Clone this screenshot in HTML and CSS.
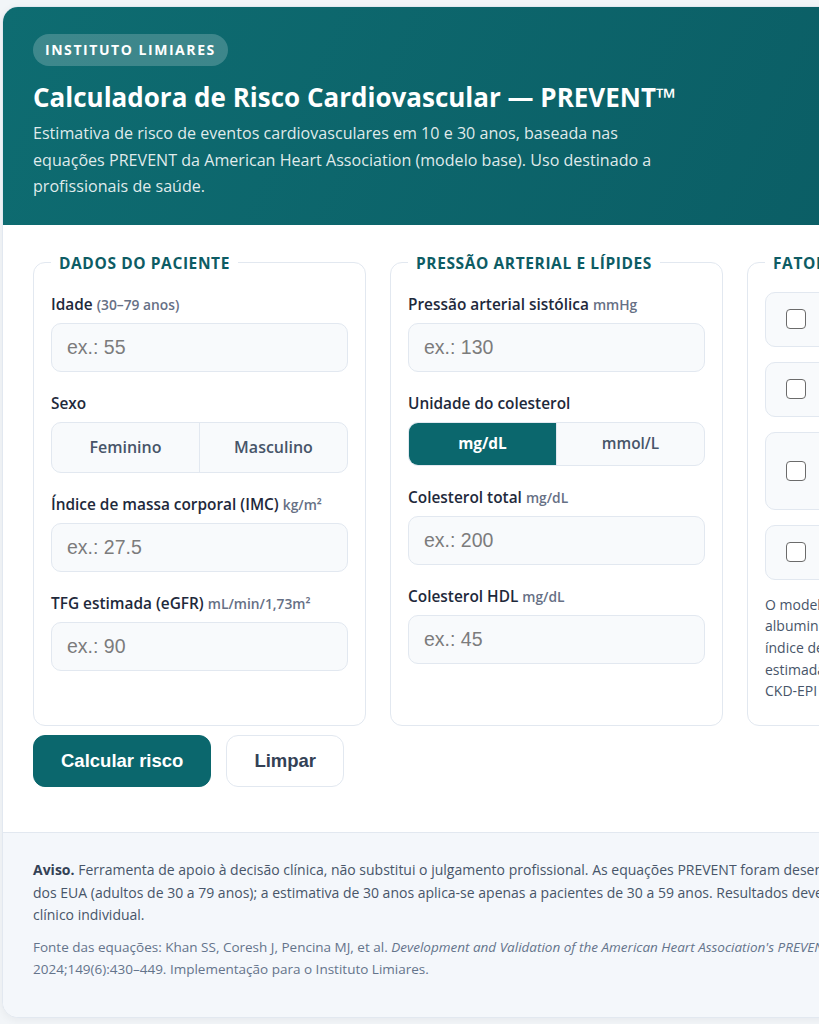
FILE: index.html
```html
<!DOCTYPE html>
<html lang="pt-BR">
<head>
  <meta charset="UTF-8">
  <meta name="viewport" content="width=device-width, initial-scale=1.0">
  <title>Calculadora de Risco Cardiovascular — PREVENT</title>
  <link rel="stylesheet" href="styles.css">
</head>
<body>
  <div class="page">
    <div class="card">
      <header class="hero">
        <span class="badge">INSTITUTO LIMIARES</span>
        <h1>Calculadora de Risco Cardiovascular — PREVENT™</h1>
        <p>Estimativa de risco de eventos cardiovasculares em 10 e 30 anos, baseada nas equações PREVENT da American Heart Association (modelo base). Uso destinado a profissionais de saúde.</p>
      </header>

      <form class="calc" onsubmit="return false">
        <div class="groups">
          <fieldset>
            <legend>Dados do paciente</legend>
            <div class="field">
              <label for="idade">Idade <small>(30–79 anos)</small></label>
              <input id="idade" type="text" placeholder="ex.: 55">
            </div>
            <div class="field">
              <label>Sexo</label>
              <div class="segmented tall">
                <button type="button" class="seg">Feminino</button>
                <button type="button" class="seg">Masculino</button>
              </div>
            </div>
            <div class="field">
              <label for="imc">Índice de massa corporal (IMC) <small>kg/m²</small></label>
              <input id="imc" type="text" placeholder="ex.: 27.5">
            </div>
            <div class="field">
              <label for="tfg">TFG estimada (eGFR) <small>mL/min/1,73m²</small></label>
              <input id="tfg" type="text" placeholder="ex.: 90">
            </div>
          </fieldset>

          <fieldset>
            <legend>Pressão arterial e lípides</legend>
            <div class="field">
              <label for="pas">Pressão arterial sistólica <small>mmHg</small></label>
              <input id="pas" type="text" placeholder="ex.: 130">
            </div>
            <div class="field">
              <label>Unidade do colesterol</label>
              <div class="segmented">
                <button type="button" class="seg active">mg/dL</button>
                <button type="button" class="seg">mmol/L</button>
              </div>
            </div>
            <div class="field">
              <label for="ct">Colesterol total <small>mg/dL</small></label>
              <input id="ct" type="text" placeholder="ex.: 200">
            </div>
            <div class="field">
              <label for="hdl">Colesterol HDL <small>mg/dL</small></label>
              <input id="hdl" type="text" placeholder="ex.: 45">
            </div>
          </fieldset>

          <fieldset>
            <legend>Fatores clínicos</legend>
            <div class="checks">
              <label class="check"><span class="box"></span>Diabetes mellitus</label>
              <label class="check"><span class="box"></span>Tabagismo atual</label>
              <label class="check"><span class="box"></span>Em uso de medicação anti-hipertensiva</label>
              <label class="check"><span class="box"></span>Em uso de estatina</label>
            </div>
            <p class="note">O modelo base não utiliza os preditores de albuminúria, hemoglobina glicada nem o índice de privação social. A TFG deve ser estimada com base na creatinina sérica, <span class="nowrap">CKD-EPI</span> 2021, sem coeficiente racial.</p>
          </fieldset>
        </div>

        <div class="actions">
          <button type="submit" class="btn primary">Calcular risco</button>
          <button type="reset" class="btn">Limpar</button>
        </div>
      </form>

      <footer class="notes">
        <p><strong>Aviso.</strong> Ferramenta de apoio à decisão clínica, não substitui o julgamento profissional. As equações PREVENT foram desenvolvidas e validadas em populações dos EUA (adultos de 30 a 79 anos); a estimativa de 30 anos aplica-se apenas a pacientes de 30 a 59 anos. Resultados devem ser interpretados no contexto clínico individual.</p>
        <p class="source">Fonte das equações: Khan SS, Coresh J, Pencina MJ, et al. <em>Development and Validation of the American Heart Association's PREVENT Equations.</em> Circulation. 2024;149(6):430–449. Implementação para o Instituto Limiares.</p>
      </footer>
    </div>
  </div>
</body>
</html>
```

FILE: styles.css
```css
body {
  margin: 0;
  background: #f2f5f8;
  font-family: 'Open Sans', 'Noto Sans', sans-serif;
  color: #1e293b;
  overflow-x: hidden;
}
.page {
  padding: 6px 0 10px 2px;
}
.card {
  width: 1108px;
  background: #fff;
  border: 1px solid #e2e8f0;
  border-radius: 16px;
  overflow: hidden;
  box-shadow: 0 2px 8px rgba(15, 23, 42, 0.05);
}

/* header */
.hero {
  background: linear-gradient(115deg, #0e6c71 0%, #0a5a62 100%);
  color: #fff;
  padding: 27px 30px 25px;
}
.badge {
  display: inline-block;
  background: rgba(255, 255, 255, 0.2);
  border-radius: 16px;
  padding: 7px 12px;
  font-size: 14px;
  line-height: 18px;
  font-weight: 700;
  letter-spacing: 1.55px;
}
.hero h1 {
  margin: 15px 0 0;
  font-size: 26px;
  line-height: 32px;
  font-weight: 700;
}
.hero p {
  margin: 7px 0 0;
  max-width: 646px;
  font-size: 16.1px;
  line-height: 26.5px;
  color: rgba(255, 255, 255, 0.88);
}

/* form */
.calc {
  padding: 28px 30px 45px;
}
.groups {
  display: grid;
  grid-template-columns: repeat(3, 333px);
  gap: 24px;
}
fieldset {
  margin: 0;
  border: 1px solid #e2e8f0;
  border-radius: 12px;
  padding: 22px 17px 23px;
  min-width: 0;
}
legend {
  padding: 0 8px;
  font-size: 15.5px;
  line-height: 20px;
  font-weight: 700;
  text-transform: uppercase;
  letter-spacing: 0.6px;
  color: #0d5c64;
}
.field + .field {
  margin-top: 22px;
}
.field > label {
  display: block;
  margin-bottom: 8px;
  font-size: 15.4px;
  line-height: 20px;
  font-weight: 600;
  color: #1e293b;
}
.field small {
  font-size: 13.8px;
  font-weight: 600;
  color: #667085;
}
.field input {
  display: block;
  box-sizing: border-box;
  width: 100%;
  height: 49px;
  padding: 0 15px;
  border: 1px solid #e2e8f0;
  border-radius: 10px;
  background: #f8fafc;
  font-family: 'Liberation Sans', Arial, sans-serif;
  font-size: 19.5px;
  color: #1e293b;
}
.field input::placeholder {
  color: #7c7c7c;
}

.segmented {
  display: flex;
  height: 42px;
  border: 1px solid #e2e8f0;
  border-radius: 10px;
  background: #f8fafc;
  overflow: hidden;
}
.segmented.tall {
  height: 49px;
}
.seg {
  flex: 1;
  border: none;
  background: transparent;
  font-family: inherit;
  font-size: 15.4px;
  font-weight: 600;
  color: #475569;
  cursor: pointer;
}
.segmented.tall .seg {
  font-size: 16px;
}
.seg + .seg {
  border-left: 1px solid #e2e8f0;
}
.seg.active {
  background: #0b676d;
  color: #fff;
  font-weight: 700;
}

/* checkboxes */
.checks {
  display: flex;
  flex-direction: column;
  gap: 15px;
  margin-top: -3px;
}
.check {
  display: flex;
  align-items: center;
  gap: 14px;
  padding: 15px 20px;
  border: 1px solid #e2e8f0;
  border-radius: 10px;
  background: #f8fafc;
  font-size: 15.4px;
  line-height: 23px;
  font-weight: 600;
  color: #1e293b;
}
.box {
  flex: none;
  width: 18px;
  height: 18px;
  border: 1.5px solid #6b6b6b;
  border-radius: 4px;
  background: #fff;
}
.note {
  margin: 14px 0 0;
  font-size: 14px;
  line-height: 21.7px;
  color: #475569;
}
.nowrap {
  white-space: nowrap;
}

/* buttons */
.actions {
  display: flex;
  gap: 15px;
  margin-top: 9px;
}
.btn {
  height: 52px;
  padding: 0 27px;
  border: 1px solid #e2e8f0;
  border-radius: 12px;
  background: #fff;
  font-family: 'Liberation Sans', Arial, sans-serif;
  font-size: 18.5px;
  font-weight: 700;
  color: #334155;
  cursor: pointer;
}
.btn.primary {
  border-color: #0b676d;
  background: #0b676d;
  color: #fff;
}

/* footer */
.notes {
  background: #f4f7fb;
  border-top: 1px solid #e2e8f0;
  padding: 26px 30px 37px;
}
.notes p {
  margin: 0;
  max-width: 1032px;
  font-size: 14px;
  line-height: 22.5px;
  color: #475569;
}
.notes strong {
  color: #334155;
}
.notes .source {
  margin-top: 9px;
  font-size: 13.5px;
  line-height: 22px;
  color: #64748b;
}
```
